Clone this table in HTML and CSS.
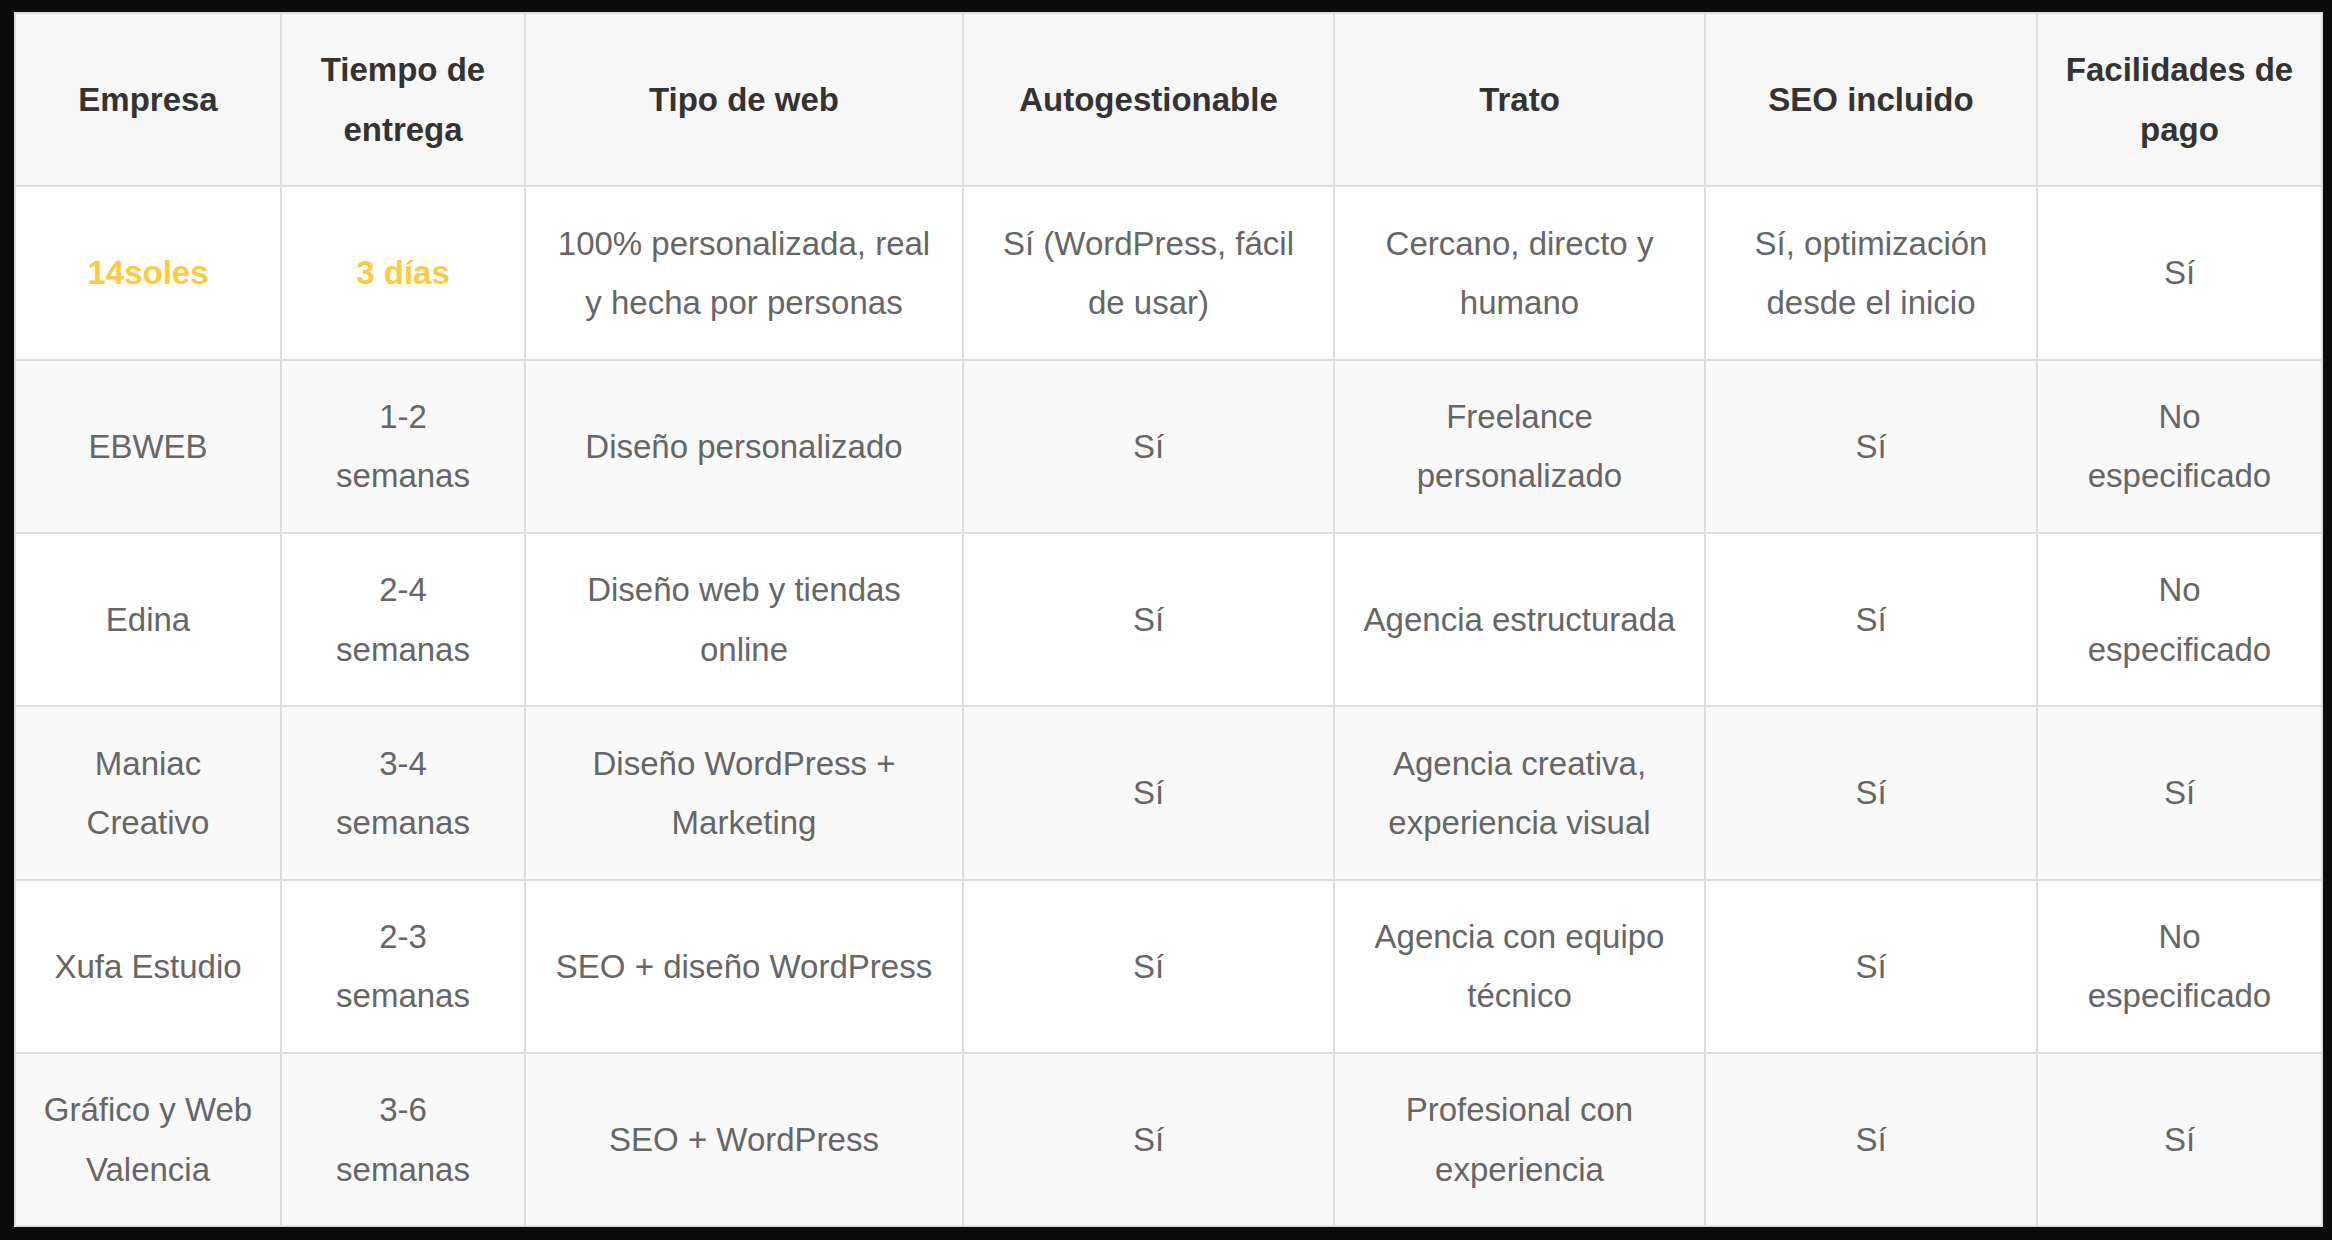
FILE: index.html
```html
<!DOCTYPE html>
<html lang="es">
<head>
<meta charset="utf-8">
<title>Comparativa</title>
<link rel="stylesheet" href="styles.css">
</head>
<body>
<table class="cmp">
  <colgroup>
    <col class="c1"><col class="c2"><col class="c3"><col class="c4"><col class="c5"><col class="c6"><col class="c7">
  </colgroup>
  <thead>
    <tr>
      <th>Empresa</th>
      <th>Tiempo de entrega</th>
      <th>Tipo de web</th>
      <th>Autogestionable</th>
      <th>Trato</th>
      <th>SEO incluido</th>
      <th>Facilidades de pago</th>
    </tr>
  </thead>
  <tbody>
    <tr>
      <td class="hl">14soles</td>
      <td class="hl">3 días</td>
      <td>100% personalizada, real y hecha por personas</td>
      <td>Sí (WordPress, fácil de usar)</td>
      <td>Cercano, directo y humano</td>
      <td>Sí, optimización desde el inicio</td>
      <td>Sí</td>
    </tr>
    <tr>
      <td>EBWEB</td>
      <td>1-2 semanas</td>
      <td>Diseño personalizado</td>
      <td>Sí</td>
      <td>Freelance personalizado</td>
      <td>Sí</td>
      <td>No especificado</td>
    </tr>
    <tr>
      <td>Edina</td>
      <td>2-4 semanas</td>
      <td>Diseño web y tiendas online</td>
      <td>Sí</td>
      <td>Agencia estructurada</td>
      <td>Sí</td>
      <td>No especificado</td>
    </tr>
    <tr>
      <td>Maniac Creativo</td>
      <td>3-4 semanas</td>
      <td>Diseño WordPress + Marketing</td>
      <td>Sí</td>
      <td>Agencia creativa, experiencia visual</td>
      <td>Sí</td>
      <td>Sí</td>
    </tr>
    <tr>
      <td>Xufa Estudio</td>
      <td>2-3 semanas</td>
      <td>SEO + diseño WordPress</td>
      <td>Sí</td>
      <td>Agencia con equipo técnico</td>
      <td>Sí</td>
      <td>No especificado</td>
    </tr>
    <tr>
      <td>Gráfico y Web Valencia</td>
      <td>3-6 semanas</td>
      <td>SEO + WordPress</td>
      <td>Sí</td>
      <td>Profesional con experiencia</td>
      <td>Sí</td>
      <td>Sí</td>
    </tr>
  </tbody>
</table>
</body>
</html>
```

FILE: styles.css
```css
html, body {
  margin: 0;
  background: #0b0b0b;
}
body {
  padding: 12px 11px 11px 14px;
  font-family: "Liberation Sans", Arial, Helvetica, sans-serif;
}
.cmp {
  width: 2307px;
  table-layout: fixed;
  border-collapse: collapse;
  border: 2px solid #dddddd;
  font-size: 33px;
  line-height: 59.4px;
  text-align: center;
}
.c1 { width: 266px; }
.c2 { width: 244px; }
.c3 { width: 438px; }
.c4 { width: 371px; }
.c5 { width: 371px; }
.c6 { width: 332px; }
.c7 { width: 285px; }
.cmp th,
.cmp td {
  border: 2px solid #dddddd;
  padding: 26.25px 26px;
  vertical-align: middle;
}
.cmp th {
  background: #f7f7f7;
  color: #333333;
  font-weight: bold;
}
.cmp td {
  color: #666666;
}
.cmp tbody tr:nth-child(odd) td { background: #ffffff; }
.cmp tbody tr:nth-child(even) td { background: #f9f9f9; }
.cmp td.hl {
  color: #fccb42;
  font-weight: bold;
}
```
